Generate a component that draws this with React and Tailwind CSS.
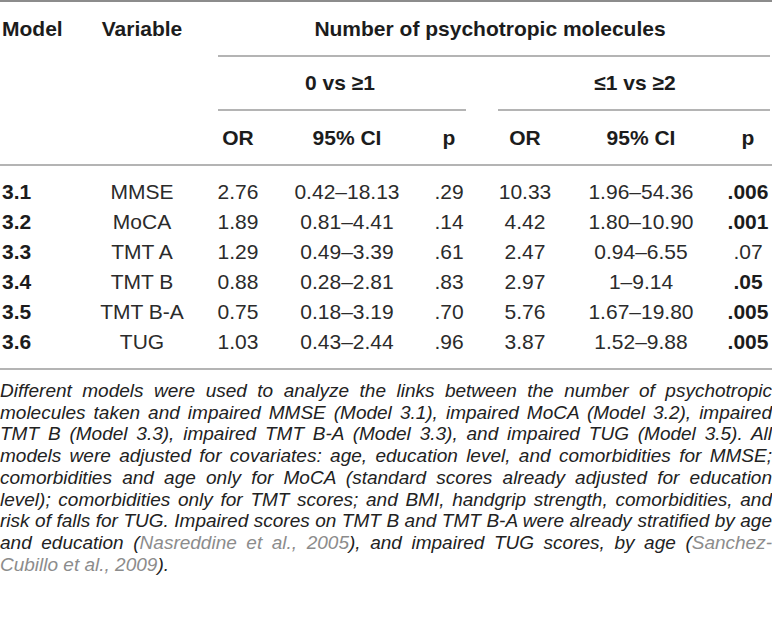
import React from 'react'

const ROWS = [
  { m: '3.1', v: 'MMSE', or1: '2.76', ci1: '0.42–18.13', p1: '.29', or2: '10.33', ci2: '1.96–54.36', p2: '.006', b: true },
  { m: '3.2', v: 'MoCA', or1: '1.89', ci1: '0.81–4.41', p1: '.14', or2: '4.42', ci2: '1.80–10.90', p2: '.001', b: true },
  { m: '3.3', v: 'TMT A', or1: '1.29', ci1: '0.49–3.39', p1: '.61', or2: '2.47', ci2: '0.94–6.55', p2: '.07', b: false },
  { m: '3.4', v: 'TMT B', or1: '0.88', ci1: '0.28–2.81', p1: '.83', or2: '2.97', ci2: '1–9.14', p2: '.05', b: true },
  { m: '3.5', v: 'TMT B-A', or1: '0.75', ci1: '0.18–3.19', p1: '.70', or2: '5.76', ci2: '1.67–19.80', p2: '.005', b: true },
  { m: '3.6', v: 'TUG', or1: '1.03', ci1: '0.43–2.44', p1: '.96', or2: '3.87', ci2: '1.52–9.88', p2: '.005', b: true },
]

// fixed column widths (sum 772)
const COLS = ['w-[96px]', 'w-[92px]', 'w-[100px]', 'w-[118px]', 'w-[86px]', 'w-[66px]', 'w-[166px]', 'w-[48px]']

const LINES = [
  'Different models were used to analyze the links between the number of psychotropic',
  'molecules taken and impaired MMSE (Model 3.1), impaired MoCA (Model 3.2), impaired',
  'TMT B (Model 3.3), impaired TMT B-A (Model 3.3), and impaired TUG (Model 3.5). All',
  'models were adjusted for covariates: age, education level, and comorbidities for MMSE;',
  'comorbidities and age only for MoCA (standard scores already adjusted for education',
  'level); comorbidities only for TMT scores; and BMI, handgrip strength, comorbidities, and',
  'risk of falls for TUG. Impaired scores on TMT B and TMT B-A were already stratified by age',
]

function Cite({ children }) {
  return <span className="text-[#8c8c8c]">{children}</span>
}

export default function App() {
  return (
    <div className="w-[772px] bg-white text-[#2b2b2b] font-['Liberation_Sans',Arial,sans-serif]">
      <div className="h-[2px] bg-[#8c8c8c]" />

      {/* header row 1 */}
      <div className="flex h-[53px] items-center text-[21px] font-bold leading-[30px] text-[#1c1c1c]">
        <div className="w-[96px] pl-[2px]">Model</div>
        <div className="w-[92px] text-center">Variable</div>
        <div className="flex-1 pl-[20px] text-center">Number of psychotropic molecules</div>
      </div>
      <div className="ml-[218px] mr-[2px] h-[2px] bg-[#b4b4b4]" />

      {/* header row 2 */}
      <div className="flex h-[52px] items-center text-[21px] font-bold leading-[30px] text-[#1c1c1c]">
        <div className="w-[188px]" />
        <div className="w-[304px] text-center">0 vs ≥1</div>
        <div className="flex-1 pl-[6px] text-center">≤1 vs ≥2</div>
      </div>
      <div className="flex">
        <div className="ml-[218px] h-[2px] w-[248px] bg-[#b4b4b4]" />
        <div className="ml-[32px] mr-[2px] h-[2px] flex-1 bg-[#b4b4b4]" />
      </div>

      {/* header row 3 */}
      <div className="flex h-[53px] items-center text-[21px] font-bold leading-[30px] text-[#1c1c1c]">
        <div className={COLS[0]} />
        <div className={COLS[1]} />
        <div className={`${COLS[2]} text-center`}>OR</div>
        <div className={`${COLS[3]} text-center`}>95% CI</div>
        <div className={`${COLS[4]} text-center`}>p</div>
        <div className={`${COLS[5]} text-center`}>OR</div>
        <div className={`${COLS[6]} text-center`}>95% CI</div>
        <div className={`${COLS[7]} text-center`}>p</div>
      </div>
      <div className="h-[2px] bg-[#b4b4b4]" />

      {/* body */}
      <div className="pt-[11px] pb-[11px] text-[21px] leading-[30px]">
        {ROWS.map((r) => (
          <div key={r.m} className="flex h-[30px] items-center">
            <div className={`${COLS[0]} pl-[2px] font-bold text-[#1c1c1c]`}>{r.m}</div>
            <div className={`${COLS[1]} text-center`}>{r.v}</div>
            <div className={`${COLS[2]} text-center`}>{r.or1}</div>
            <div className={`${COLS[3]} text-center`}>{r.ci1}</div>
            <div className={`${COLS[4]} text-center`}>{r.p1}</div>
            <div className={`${COLS[5]} text-center`}>{r.or2}</div>
            <div className={`${COLS[6]} text-center`}>{r.ci2}</div>
            <div className={`${COLS[7]} text-center ${r.b ? 'font-bold text-[#1c1c1c]' : ''}`}>{r.p2}</div>
          </div>
        ))}
      </div>
      <div className="h-[2px] bg-[#b4b4b4]" />

      {/* footnote */}
      <div className="mt-[10px] text-[19px] italic leading-[21.7px] text-[#222]">
        {LINES.map((l) => (
          <div key={l} className="text-justify [text-align-last:justify]">{l}</div>
        ))}
        <div className="text-justify [text-align-last:justify]">
          and education (<Cite>Nasreddine et al., 2005</Cite>), and impaired TUG scores, by age (<Cite>Sanchez-</Cite>
        </div>
        <div>
          <Cite>Cubillo et al., 2009</Cite>).
        </div>
      </div>
    </div>
  )
}
